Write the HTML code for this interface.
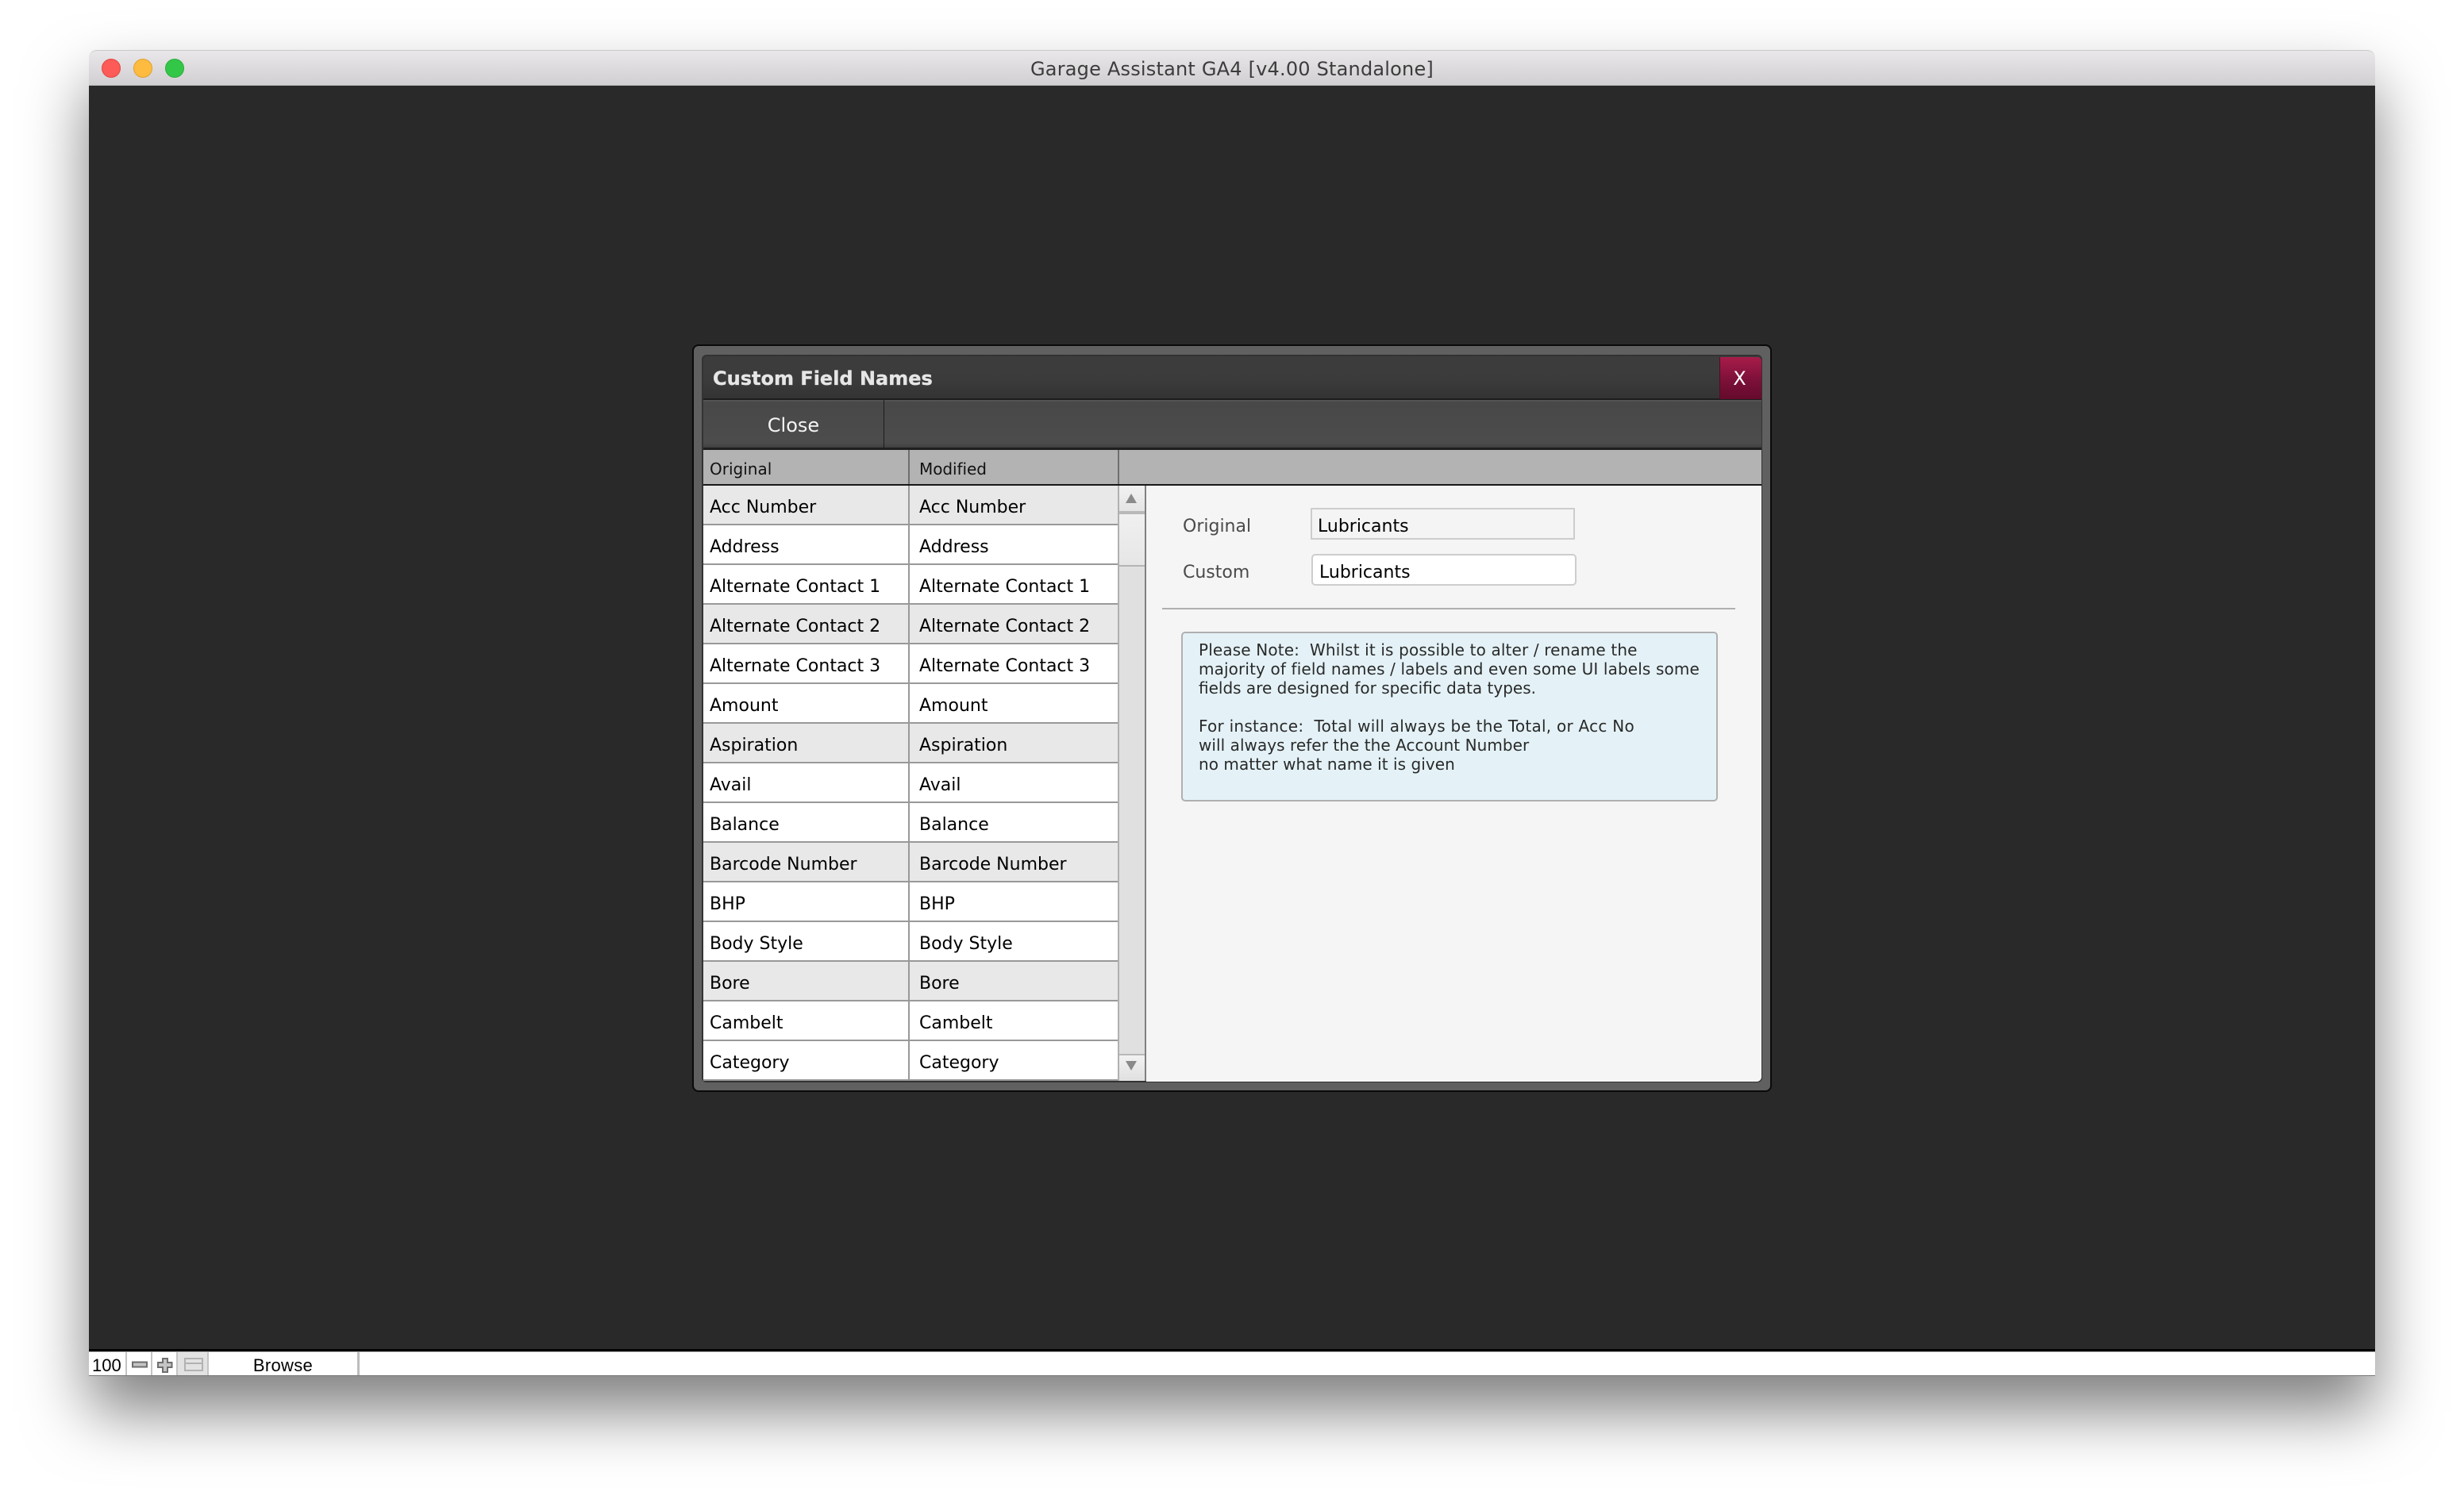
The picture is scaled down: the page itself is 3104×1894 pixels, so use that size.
<!DOCTYPE html>
<html><head><meta charset="utf-8"><title>Garage Assistant GA4</title>
<style>
html,body{margin:0;padding:0;width:3104px;height:1894px;background:#fff;overflow:hidden}
*{box-sizing:border-box}
div,span{position:absolute}
body{font-family:"DejaVu Sans","Liberation Sans",sans-serif;color:#000}
.t{white-space:pre;line-height:30px;height:30px}
.r{left:886px;width:522px;height:50px;border-bottom:2px solid #999;background:#fff}
.g{background:#e8e8e8}
.c1,.c2{font-size:22px;top:13px;line-height:30px;white-space:pre;color:#000}
.c1{left:8px}.c2{left:272px}
.n{left:1510px;font-size:20px;line-height:24px;white-space:pre;color:#2a2a2a}
</style></head><body>
<div id="w" style="left:112px;top:63px;width:2880px;height:1671px;border-radius:10px 10px 0 0;box-shadow:0 44px 80px 0 rgba(0,0,0,.5)"></div>

<div style="left:112px;top:63px;width:2880px;height:45px;border-radius:10px 10px 0 0;background:linear-gradient(#e9e7e9,#d1cfd1);border-top:1px solid #c9c9c9;border-bottom:1px solid #b8b8b8"></div>
<div style="left:128px;top:74px;width:24px;height:24px;border-radius:50%;background:#fc5b57;border:1px solid #e2463f"></div>
<div style="left:168px;top:74px;width:24px;height:24px;border-radius:50%;background:#fdbc3f;border:1px solid #e0a030"></div>
<div style="left:208px;top:74px;width:24px;height:24px;border-radius:50%;background:#33c748;border:1px solid #2aad3b"></div>
<div class="t" style="left:112px;width:2880px;top:72px;text-align:center;font-size:24px;letter-spacing:.2px;color:#3c3c3c">Garage Assistant GA4 [v4.00 Standalone]</div>

<div style="left:112px;top:108px;width:2880px;height:1592px;background:#292929"></div>
<div style="left:112px;top:1700px;width:2880px;height:3px;background:#000"></div>
<div style="left:112px;top:1703px;width:2880px;height:31px;background:#fff"></div>
<div style="left:112px;top:1703px;width:2880px;height:1px;background:#b5b5b5"></div>
<div style="left:112px;top:1733px;width:2880px;height:1px;background:#777"></div>
<div style="left:158px;top:1704px;width:2px;height:29px;background:#c4c4c4"></div>
<div style="left:190px;top:1704px;width:2px;height:29px;background:#c4c4c4"></div>
<div style="left:222px;top:1704px;width:41px;height:29px;background:#e2e2e2;border-left:2px solid #c4c4c4;border-right:2px solid #c4c4c4"></div>
<div style="left:450px;top:1704px;width:3px;height:29px;background:#bdbdbd"></div>
<div class="t" style="left:116px;top:1706px;font:22px/30px 'Liberation Sans',sans-serif">100</div>
<div class="t" style="left:263px;width:187px;text-align:center;top:1706px;font:22px/30px 'Liberation Sans',sans-serif;letter-spacing:.3px">Browse</div>
<svg style="position:absolute;left:160px;top:1704px" width="100" height="30" viewBox="0 0 100 30">
<rect x="7" y="12.5" width="18" height="6" fill="#c4c4c4" stroke="#6e6e6e" stroke-width="2"/>
<path d="M45 8h6v5h5.500v6h-5.500v6h-6v-6h-6v-6h6z" fill="#c4c4c4" stroke="#6e6e6e" stroke-width="2"/>
<rect x="73" y="8" width="22" height="15" fill="none" stroke="#b2b2b2" stroke-width="2"/>
<rect x="73" y="13" width="22" height="2" fill="#b2b2b2"/>
</svg>

<div style="left:872px;top:434px;width:1360px;height:942px;background:#606060;border:2px solid #0a0a0a;border-radius:8px"></div>
<div style="left:884px;top:447px;width:1336px;height:917px;background:#333;border-radius:6px"></div>
<div style="left:886px;top:449px;width:1333px;height:54px;background:linear-gradient(#3d3d3d,#3b3b3b 55%,#333);border-radius:5px 5px 0 0"></div>
<div style="left:886px;top:502px;width:1333px;height:2px;background:#1d1d1d"></div>
<div class="t" style="left:898px;top:462px;font-size:24px;font-weight:bold;color:#e6e6e6;-webkit-text-stroke:.3px #e6e6e6">Custom Field Names</div>
<div style="left:2166px;top:450px;width:53px;height:53px;background:linear-gradient(#a81c4a,#7c1038 55%,#650a2c);border-radius:0 5px 0 0;border-left:1px solid #4a1026"></div>
<div class="t" style="left:2165px;width:53px;top:462px;text-align:center;font-size:24px;color:#fff">X</div>

<div style="left:886px;top:504px;width:1333px;height:60px;background:linear-gradient(#585858,#484848 5%,#4c4c4c 90%,#404040)"></div>
<div style="left:886px;top:564px;width:1333px;height:3px;background:#1f1f1f"></div>
<div style="left:1113px;top:503px;width:1px;height:63px;background:#1c1c1c"></div>
<div class="t" style="left:886px;width:227px;top:521px;text-align:center;font-size:24px;color:#f4f4f4">Close</div>

<div style="left:886px;top:567px;width:1333px;height:43px;background:#b3b3b3"></div>
<div style="left:1144px;top:567px;width:2px;height:43px;background:#6f6f6f"></div>
<div style="left:1408px;top:567px;width:2px;height:43px;background:#6f6f6f"></div>
<div style="left:886px;top:610px;width:1333px;height:2px;background:#181818"></div>
<div class="t" style="left:894px;top:576px;font-size:20px;color:#111">Original</div>
<div class="t" style="left:1158px;top:576px;font-size:20px;letter-spacing:-.05px;color:#111">Modified</div>

<div style="left:1444px;top:612px;width:775px;height:751px;background:#f5f5f5;border-radius:0 0 6px 0"></div>

<div class="r g" style="top:612px"><span class="c1">Acc Number</span><span class="c2">Acc Number</span></div>
<div class="r" style="top:662px"><span class="c1">Address</span><span class="c2">Address</span></div>
<div class="r" style="top:712px"><span class="c1">Alternate Contact 1</span><span class="c2">Alternate Contact 1</span></div>
<div class="r g" style="top:762px"><span class="c1">Alternate Contact 2</span><span class="c2">Alternate Contact 2</span></div>
<div class="r" style="top:812px"><span class="c1">Alternate Contact 3</span><span class="c2">Alternate Contact 3</span></div>
<div class="r" style="top:862px"><span class="c1">Amount</span><span class="c2">Amount</span></div>
<div class="r g" style="top:912px"><span class="c1">Aspiration</span><span class="c2">Aspiration</span></div>
<div class="r" style="top:962px"><span class="c1">Avail</span><span class="c2">Avail</span></div>
<div class="r" style="top:1012px"><span class="c1">Balance</span><span class="c2">Balance</span></div>
<div class="r g" style="top:1062px"><span class="c1">Barcode Number</span><span class="c2">Barcode Number</span></div>
<div class="r" style="top:1112px"><span class="c1">BHP</span><span class="c2">BHP</span></div>
<div class="r" style="top:1162px"><span class="c1">Body Style</span><span class="c2">Body Style</span></div>
<div class="r g" style="top:1212px"><span class="c1">Bore</span><span class="c2">Bore</span></div>
<div class="r" style="top:1262px"><span class="c1">Cambelt</span><span class="c2">Cambelt</span></div>
<div class="r" style="top:1312px;height:48px;border-bottom:0"><span class="c1">Category</span><span class="c2">Category</span></div>
<div style="left:1144px;top:612px;width:2px;height:748px;background:#999"></div>
<div style="left:886px;top:1360px;width:522px;height:2px;background:#999"></div>

<div style="left:1408px;top:612px;width:36px;height:750px;background:#e0e0e0;border-left:2px solid #b0b0b0;border-right:2px solid #808080"></div>
<div style="left:1410px;top:612px;width:32px;height:32px;background:linear-gradient(#f2f2f2,#e4e4e4)"></div>
<div style="left:1410px;top:644px;width:32px;height:4px;background:#b8b8b8"></div>
<div style="left:1410px;top:648px;width:32px;height:66px;background:linear-gradient(#f0f0f0,#e6e6e6);border-bottom:2px solid #b4b4b4"></div>
<div style="left:1410px;top:1328px;width:32px;height:34px;background:linear-gradient(#f2f2f2,#e0e0e0);border-top:2px solid #b8b8b8"></div>
<svg style="position:absolute;left:1410px;top:612px" width="32" height="750" viewBox="0 0 32 750"><path d="M15 10L22 22H8Z" fill="#8a8a8a"/><path d="M8 725H22L15 737Z" fill="#8a8a8a"/></svg>

<div class="t" style="left:1490px;top:649px;font-size:22px;color:#4a4a4a">Original</div>
<div class="t" style="left:1490px;top:707px;font-size:22px;color:#4a4a4a">Custom</div>
<div style="left:1651px;top:640px;width:333px;height:40px;background:#f4f4f4;border:2px solid #cdcdcd"></div>
<div class="t" style="left:1660px;top:649px;font-size:22px">Lubricants</div>
<div style="left:1652px;top:698px;width:334px;height:40px;background:#fff;border:2px solid #cdcdcd;border-radius:5px"></div>
<div class="t" style="left:1662px;top:707px;font-size:22px">Lubricants</div>
<div style="left:1464px;top:766px;width:722px;height:2px;background:#b0b0b0"></div>

<div style="left:1488px;top:796px;width:676px;height:214px;background:#e4f2f7;border:2px solid #b0b0b0;border-radius:5px"></div>
<div class="n" style="top:807px;letter-spacing:.14px">Please Note:  Whilst it is possible to alter / rename the</div>
<div class="n" style="top:831px;letter-spacing:.13px">majority of field names / labels and even some UI labels some</div>
<div class="n" style="top:855px">fields are designed for specific data types.</div>
<div class="n" style="top:903px;letter-spacing:.25px">For instance:  Total will always be the Total, or Acc No</div>
<div class="n" style="top:927px;letter-spacing:.05px">will always refer the the Account Number</div>
<div class="n" style="top:951px;letter-spacing:.05px">no matter what name it is given</div>
</body></html>
